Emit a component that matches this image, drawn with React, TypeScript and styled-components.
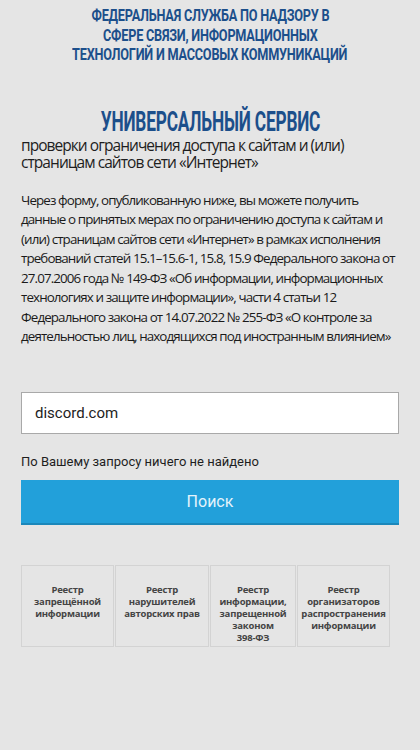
import React from "react";
import styled, { createGlobalStyle } from "styled-components";

const Global = createGlobalStyle`
  html, body { margin: 0; padding: 0; background: #e5e5e5; }
  body { font-family: "Open Sans", "Noto Sans", sans-serif; }
  * { box-sizing: border-box; }
`;

const Page = styled.div`
  width: 420px;
  min-height: 750px;
  background: #e5e5e5;
  padding: 6px 21px 0 21px;
  display: flex;
  flex-direction: column;
`;

const Agency = styled.div`
  text-align: center;
  color: #1c4f8b;
  font-family: "Roboto", sans-serif;
  font-weight: 700;
  font-size: 16.5px;
  line-height: 19.5px;
  text-transform: uppercase;
`;

const Squeeze = styled.span<{ $x: number }>`
  display: inline-block;
  white-space: nowrap;
  transform: scaleX(${(p) => p.$x});
  letter-spacing: -0.3px;
`;

const ServiceTitle = styled.h1`
  margin: 43px 0 0 0;
  text-align: center;
  color: #1c4f8b;
  font-family: "Roboto", sans-serif;
  font-weight: 700;
  font-size: 27px;
  line-height: 29px;
`;

const Subtitle = styled.p`
  margin: 0;
  color: #1e1e1e;
  font-size: 15.5px;
  line-height: 17px;
  letter-spacing: -0.95px;
`;

const Lead = styled.p`
  margin: 20px 0 0 0;
  color: #1a1a1a;
  font-size: 13.4px;
  line-height: 19.5px;
  letter-spacing: -0.9px;
  white-space: nowrap;
`;

const Field = styled.input`
  margin-top: 45px;
  width: 100%;
  height: 42px;
  border: 1px solid #a9a9a9;
  background: #fff;
  padding: 0 13px;
  font-family: "Roboto", sans-serif;
  font-size: 15px;
  color: #222;
  outline: none;
`;

const Notice = styled.div`
  margin-top: 20px;
  font-family: "Roboto", sans-serif;
  font-size: 13px;
  color: #1e1e1e;
  line-height: 16px;
`;

const SearchButton = styled.button`
  margin-top: 10px;
  width: 100%;
  height: 45px;
  border: none;
  border-bottom: 2px solid #1b87ba;
  background: #22a0da;
  color: #e4f3fb;
  font-family: "Roboto", sans-serif;
  font-size: 16px;
  cursor: pointer;
`;

const Registries = styled.div`
  margin-top: 40px;
  display: flex;
  gap: 1px;
`;

const Registry = styled.a<{ $w: number }>`
  width: ${(p) => p.$w}px;
  height: 82px;
  border: 1px solid #d3d3d3;
  padding-top: 18px;
  text-align: center;
  font-size: 9.5px;
  line-height: 12px;
  font-weight: 700;
  color: #444;
  text-decoration: none;
  letter-spacing: -0.2px;
`;

const registries = [
  { w: 93, lines: ["Реестр", "запрещённой", "информации"] },
  { w: 94, lines: ["Реестр", "нарушителей", "авторских прав"] },
  { w: 86, lines: ["Реестр", "информации,", "запрещенной", "законом", "398-ФЗ"] },
  { w: 93, lines: ["Реестр", "организаторов", "распространения", "информации"] },
];

const leadLines = [
  "Через форму, опубликованную ниже, вы можете получить",
  "данные о принятых мерах по ограничению доступа к сайтам и",
  "(или) страницам сайтов сети «Интернет» в рамках исполнения",
  "требований статей 15.1–15.6-1, 15.8, 15.9 Федерального закона от",
  "27.07.2006 года № 149-ФЗ «Об информации, информационных",
  "технологиях и защите информации», части 4 статьи 12",
  "Федерального закона от 14.07.2022 № 255-ФЗ «О контроле за",
  "деятельностью лиц, находящихся под иностранным влиянием»",
];

export default function App() {
  return (
    <>
      <Global />
      <Page>
        <Agency>
          <Squeeze $x={0.77}>Федеральная служба по надзору в</Squeeze>
          <br />
          <Squeeze $x={0.77}>сфере связи, информационных</Squeeze>
          <br />
          <Squeeze $x={0.77}>технологий и массовых коммуникаций</Squeeze>
        </Agency>
        <ServiceTitle>
          <Squeeze $x={0.64}>УНИВЕРСАЛЬНЫЙ СЕРВИС</Squeeze>
        </ServiceTitle>
        <Subtitle>
          проверки ограничения доступа к сайтам и (или)
          <br />
          страницам сайтов сети «Интернет»
        </Subtitle>
        <Lead>
          {leadLines.map((l, i) => (
            <React.Fragment key={i}>
              {l}
              {i < leadLines.length - 1 && <br />}
            </React.Fragment>
          ))}
        </Lead>
        <Field defaultValue="discord.com" />
        <Notice>По Вашему запросу ничего не найдено</Notice>
        <SearchButton>Поиск</SearchButton>
        <Registries>
          {registries.map((r, i) => (
            <Registry key={i} $w={r.w} href="#">
              {r.lines.map((l, j) => (
                <React.Fragment key={j}>
                  {l}
                  {j < r.lines.length - 1 && <br />}
                </React.Fragment>
              ))}
            </Registry>
          ))}
        </Registries>
      </Page>
    </>
  );
}
